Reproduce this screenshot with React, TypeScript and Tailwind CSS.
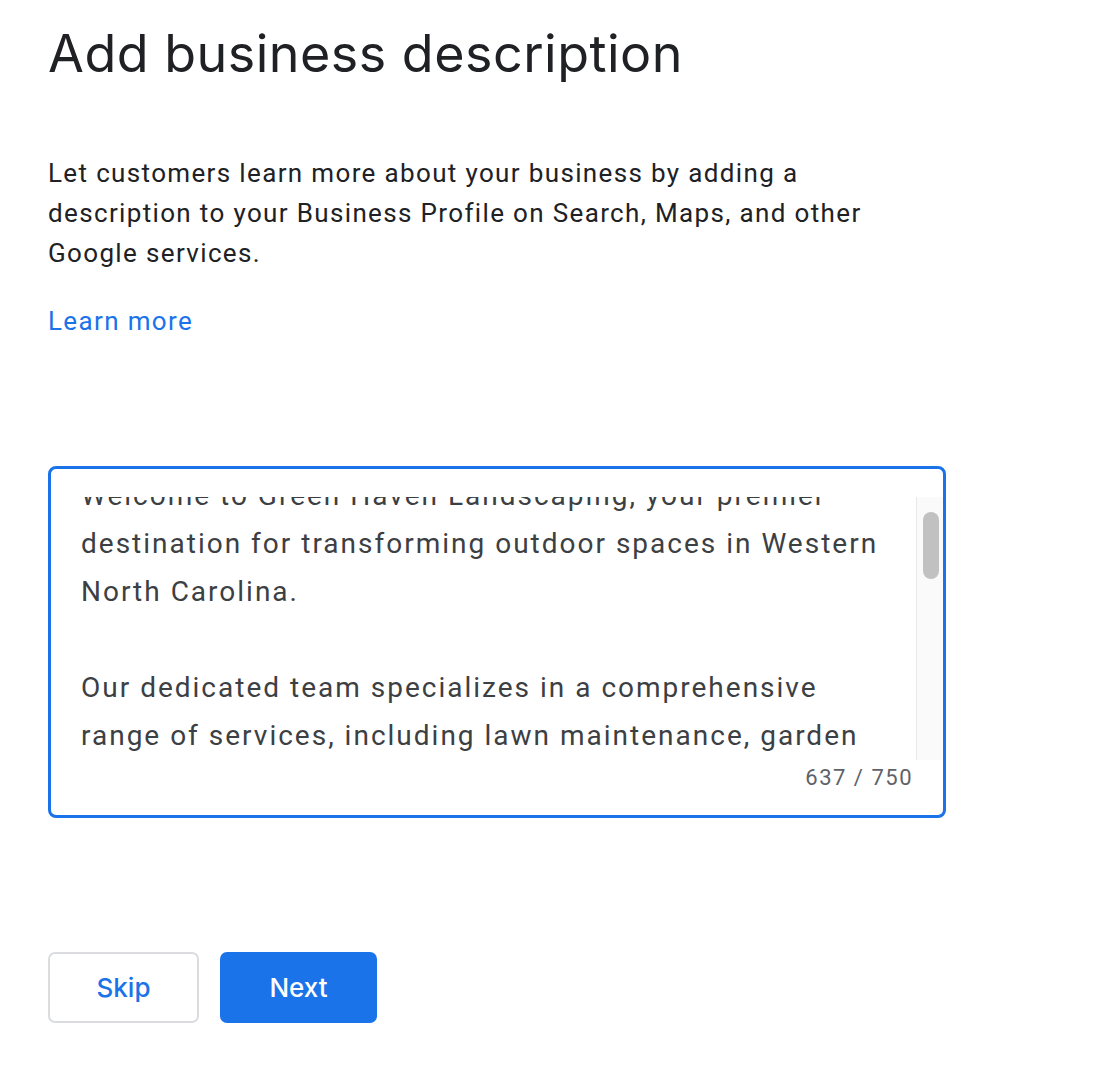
const lines = [
  "Welcome to Green Haven Landscaping, your premier",
  "destination for transforming outdoor spaces in Western",
  "North Carolina.",
  "",
  "Our dedicated team specializes in a comprehensive",
  "range of services, including lawn maintenance, garden",
  "design, hardscaping, and seasonal clean-ups.",
  "",
];

export default function App() {
  return (
    <div className="min-h-screen bg-white px-[48px] pt-[20px] font-['Roboto','Liberation_Sans',sans-serif]">
      {/* Header */}
      <h1 className="text-[52px] leading-[68px] font-normal text-[#202124] font-['Inter','Roboto',sans-serif] tracking-[0.5px]">
        Add business description
      </h1>

      <p className="mt-[65px] text-[26px] leading-[40px] text-[#202124] tracking-[1.35px]">
        Let customers learn more about your business by adding a<br />
        description to your Business Profile on Search, Maps, and other<br />
        Google services.
      </p>

      <a href="#" className="mt-[28px] block text-[26px] leading-[40px] text-[#1a73e8] tracking-[1.35px] w-fit">
        Learn more
      </a>

      {/* Description field */}
      <div className="mt-[125px] w-[898px] h-[352px] border-[3px] border-[#1a73e8] rounded-[8px] pt-[28px] pl-[30px] flex flex-col">
        <div className="flex h-[263px]">
          <div className="flex-1 overflow-hidden">
            <div className="mt-[-25px] text-[28px] leading-[48px] text-[#3c4043] tracking-[2px]">
              {lines.map((l, i) => (
                <div key={i} className="h-[48px] whitespace-nowrap">
                  {l}
                </div>
              ))}
            </div>
          </div>
          <div className="w-[27px] bg-[#fafafa] border-l border-[#e8e8e8] pt-[15px] pl-[6px]">
            <div className="w-[16px] h-[67px] rounded-full bg-[#c1c1c1]" />
          </div>
        </div>
        <div className="mt-[6px] mr-[30px] text-right text-[22px] leading-[24px] text-[#5f6368] tracking-[1.5px]">
          637 / 750
        </div>
      </div>

      {/* Actions */}
      <div className="mt-[134px] flex gap-[21px]">
        <button className="w-[151px] h-[71px] rounded-[7px] border-2 border-[#dadce0] bg-white text-[26px] font-medium text-[#1a73e8] font-['Inter','Roboto',sans-serif]">
          Skip
        </button>
        <button className="w-[157px] h-[71px] rounded-[7px] bg-[#1a73e8] text-[26px] font-medium text-white font-['Inter','Roboto',sans-serif]">
          Next
        </button>
      </div>
    </div>
  );
}
